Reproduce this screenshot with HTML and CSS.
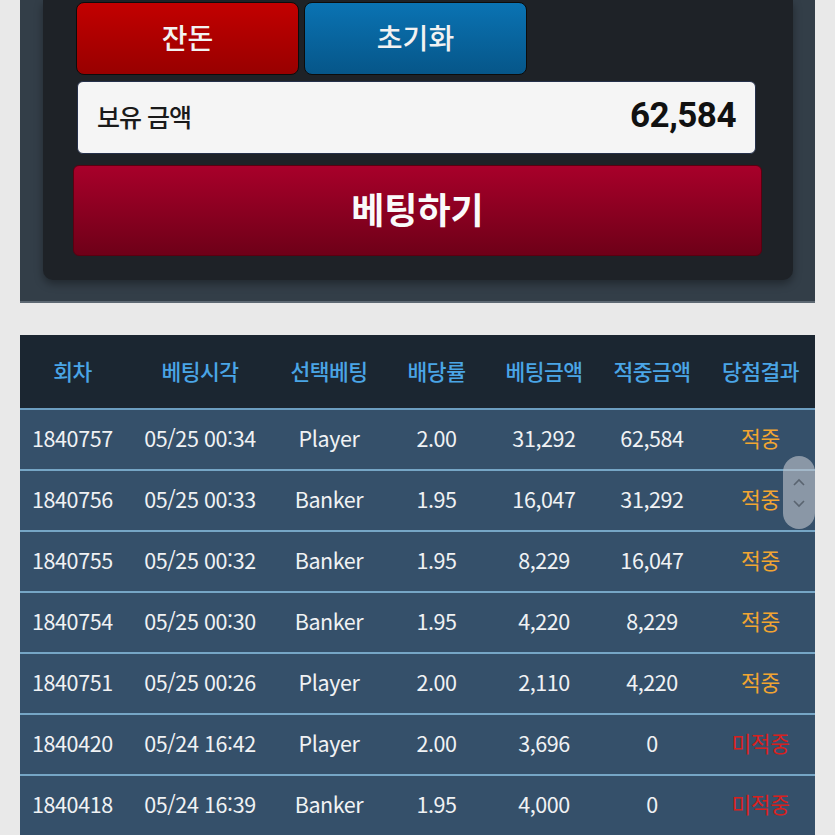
FILE: index.html
```html
<!DOCTYPE html>
<html lang="ko">
<head>
<meta charset="utf-8">
<link rel="stylesheet" href="styles.css">
</head>
<body>
<div class="frame">
  <div class="panel">
    <div class="btn-row">
      <button class="btn btn-red">잔돈</button>
      <button class="btn btn-blue">초기화</button>
    </div>
    <div class="balance">
      <span class="bal-label">보유 금액</span>
      <span class="bal-value">62,584</span>
    </div>
    <button class="bet">베팅하기</button>
  </div>
</div>

<div class="table-wrap">
  <table class="hist">
    <colgroup>
      <col class="c1"><col class="c2"><col class="c3"><col class="c4"><col class="c5"><col class="c6"><col class="c7">
    </colgroup>
    <thead>
      <tr><th>회차</th><th>베팅시각</th><th>선택베팅</th><th>배당률</th><th>베팅금액</th><th>적중금액</th><th>당첨결과</th></tr>
    </thead>
    <tbody>
      <tr><td>1840757</td><td>05/25 00:34</td><td>Player</td><td>2.00</td><td>31,292</td><td>62,584</td><td class="win">적중</td></tr>
      <tr><td>1840756</td><td>05/25 00:33</td><td>Banker</td><td>1.95</td><td>16,047</td><td>31,292</td><td class="win">적중</td></tr>
      <tr><td>1840755</td><td>05/25 00:32</td><td>Banker</td><td>1.95</td><td>8,229</td><td>16,047</td><td class="win">적중</td></tr>
      <tr><td>1840754</td><td>05/25 00:30</td><td>Banker</td><td>1.95</td><td>4,220</td><td>8,229</td><td class="win">적중</td></tr>
      <tr><td>1840751</td><td>05/25 00:26</td><td>Player</td><td>2.00</td><td>2,110</td><td>4,220</td><td class="win">적중</td></tr>
      <tr><td>1840420</td><td>05/24 16:42</td><td>Player</td><td>2.00</td><td>3,696</td><td>0</td><td class="lose">미적중</td></tr>
      <tr><td>1840418</td><td>05/24 16:39</td><td>Banker</td><td>1.95</td><td>4,000</td><td>0</td><td class="lose">미적중</td></tr>
    </tbody>
  </table>
  <div class="scroller">
    <svg width="14" height="10" viewBox="0 0 14 10"><path d="M2 8 L7 3 L12 8" fill="none" stroke="#5a6470" stroke-width="1.6"/></svg>
    <svg width="14" height="10" viewBox="0 0 14 10"><path d="M2 2 L7 7 L12 2" fill="none" stroke="#5a6470" stroke-width="1.6"/></svg>
  </div>
</div>
</body>
</html>
```

FILE: styles.css
```css
* { box-sizing: border-box; }
html, body { margin: 0; padding: 0; }
body {
  background: #e9e9e9;
  font-family: "Noto Sans CJK KR", "Noto Sans", sans-serif;
  width: 835px;
  height: 835px;
  overflow: hidden;
}
.frame {
  margin: 0 20px;
  background: #333e48;
  padding: 0 22px 21px 23px;
  border-bottom: 2px solid #5d6872;
}
.panel {
  background: #1e2227;
  border-radius: 0 0 10px 10px;
  box-shadow: 0 4px 8px rgba(0,0,0,0.35);
  padding: 2px 31px 24px 30px;
}
.btn-row {
  display: flex;
  gap: 5px;
  padding-left: 3px;
}
.btn {
  width: 223px;
  height: 73px;
  border: 1px solid #0c0c0c;
  border-radius: 8px;
  color: #f2f2f2;
  font-family: "Noto Sans CJK KR", sans-serif;
  font-size: 28px;
  font-weight: 500;
  padding: 0 0 4px;
}
.btn-red { background: linear-gradient(#c20000, #980000); }
.btn-blue { background: linear-gradient(#0a73b3, #065689); }
.balance {
  margin: 6px 6px 0 4px;
  height: 73px;
  background: #f5f5f5;
  border: 1px solid #25304a;
  border-radius: 6px;
  display: flex;
  align-items: center;
  justify-content: space-between;
  padding: 0 19px 0 19px;
}
.bal-label {
  font-size: 25px;
  font-weight: 500;
  color: #1a1a1a;
  letter-spacing: -1px;
  padding-bottom: 3px;
}
.bal-value {
  font-family: Roboto, "Liberation Sans", sans-serif;
  font-size: 35px;
  font-weight: 700;
  color: #111;
  letter-spacing: -0.5px;
  padding-bottom: 4px;
}
.bet {
  display: block;
  width: 100%;
  margin-top: 11px;
  height: 91px;
  border: 1px solid #5a0010;
  border-radius: 6px;
  background: linear-gradient(#a8002a, #6e0018);
  color: #fafafa;
  font-family: "Noto Sans CJK KR", sans-serif;
  font-size: 36px;
  font-weight: 700;
  padding: 0 0 6px;
}
.table-wrap {
  position: relative;
  margin: 32px 20px 0;
}
.hist {
  width: 795px;
  border-collapse: collapse;
  table-layout: fixed;
  font-family: "Noto Sans CJK KR", sans-serif;
}
.c1 { width: 105px; }
.c2 { width: 150px; }
.c3 { width: 108px; }
.c4 { width: 107px; }
.c5 { width: 108px; }
.c6 { width: 108px; }
.c7 { width: 109px; }
.hist th {
  background: #1b2631;
  color: #4aa5e6;
  font-size: 21.5px;
  font-weight: 500;
  height: 74px;
  padding: 0 0 2px;
  letter-spacing: -0.5px;
  border-bottom: 2px solid #6c9dc0;
  white-space: nowrap;
}
.hist td {
  background: #35506a;
  color: #f0f2f4;
  font-size: 21.5px;
  font-weight: 400;
  text-align: center;
  height: 61px;
  padding: 0 0 4px;
  border-bottom: 2px solid #76a6c6;
  white-space: nowrap;
  letter-spacing: -0.4px;
}
.hist td:first-child { text-align: left; padding-left: 12px; }
.hist td.win { color: #f2a531; }
.hist td.lose { color: #d8201e; }
.scroller {
  position: absolute;
  left: 763px;
  top: 121px;
  width: 32px;
  height: 73px;
  border-radius: 16px;
  background: rgba(190, 196, 204, 0.62);
  display: flex;
  flex-direction: column;
  align-items: center;
  justify-content: center;
  gap: 12px;
}
```
